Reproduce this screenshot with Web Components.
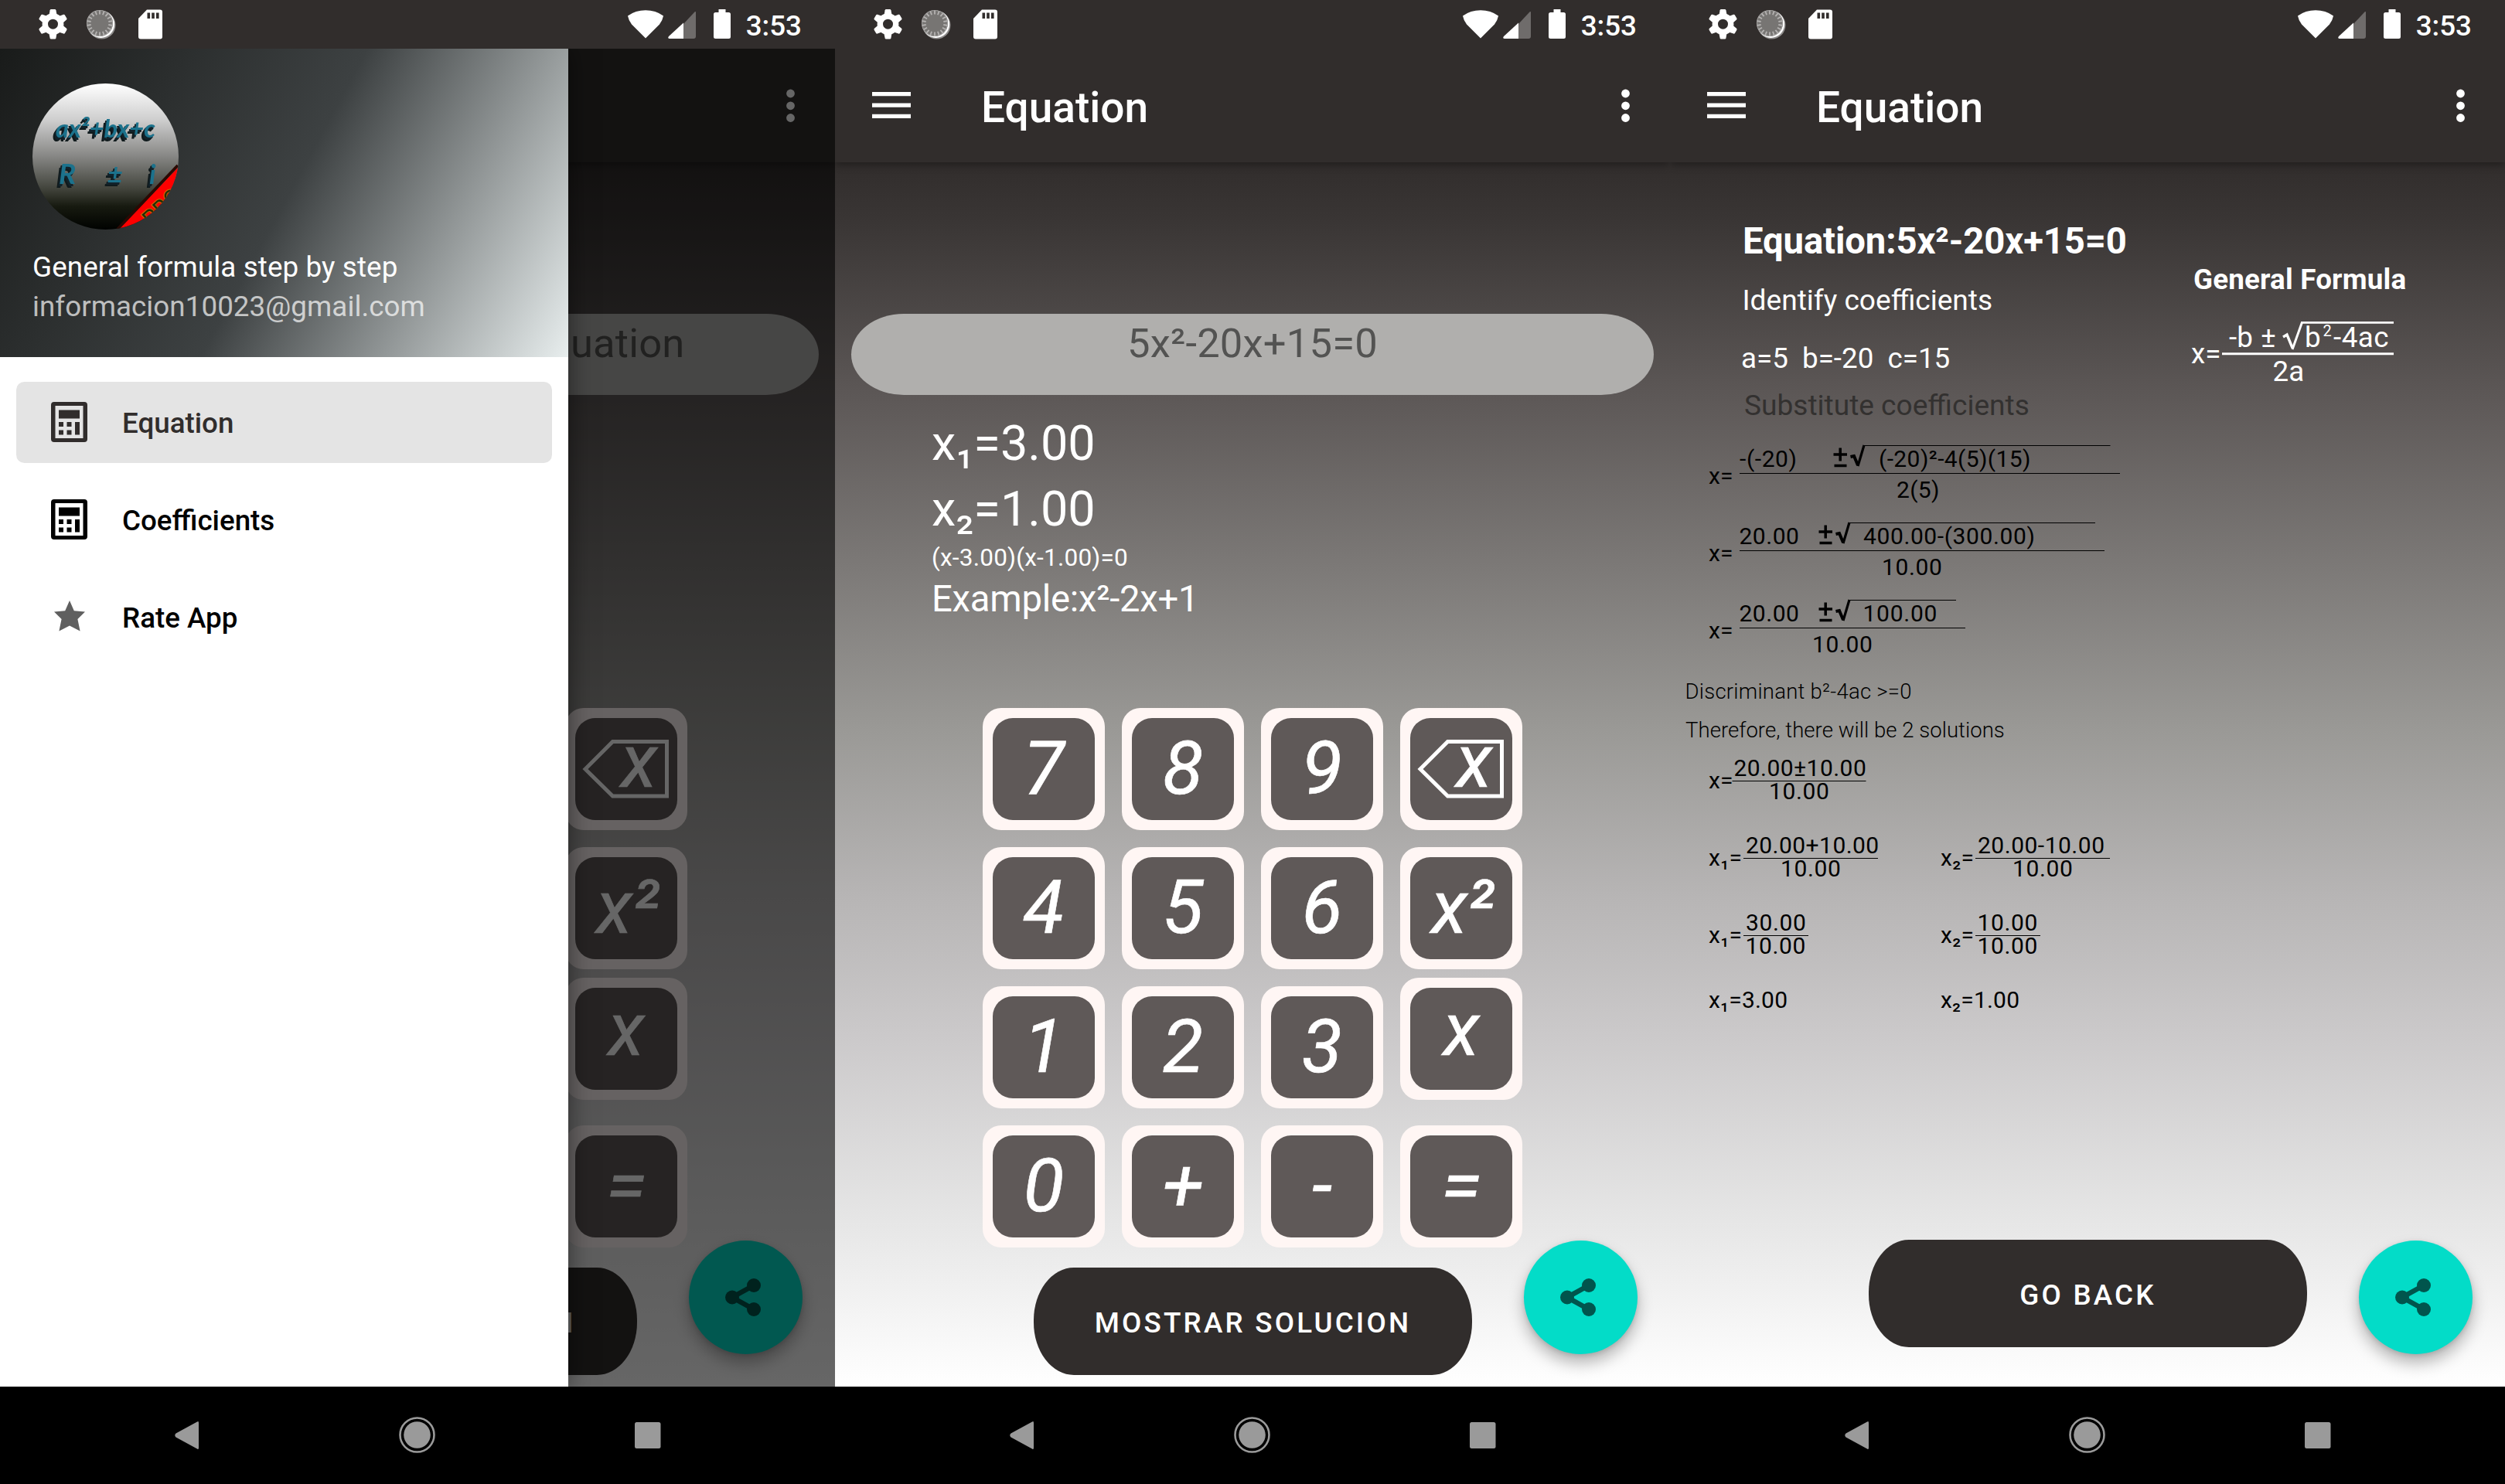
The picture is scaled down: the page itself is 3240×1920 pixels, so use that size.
<!DOCTYPE html>
<html lang="en">
<head>
<meta charset="utf-8">
<title>Equation</title>
<style>
html,body{margin:0;padding:0;background:#000}
body{width:3240px;height:1920px;overflow:hidden;display:flex;font-family:Roboto,"Noto Sans",sans-serif;color:#fff}
</style>
</head>
<body>
<phone-screen>
  <app-bar dim></app-bar>
  <app-page>
    <equation-field side="left">uation</equation-field>
    <key-pad columns="last"></key-pad>
    <wide-button short>N</wide-button>
  </app-page>
  <share-fab slot="over"></share-fab>
  <nav-drawer slot="drawer"></nav-drawer>
</phone-screen>
<phone-screen>
  <app-bar heading="Equation"></app-bar>
  <app-page>
    <equation-field>5x²-20x+15=0</equation-field>
    <result-list></result-list>
    <key-pad></key-pad>
    <wide-button>MOSTRAR SOLUCION</wide-button>
  </app-page>
  <share-fab slot="over"></share-fab>
</phone-screen>
<phone-screen>
  <app-bar heading="Equation"></app-bar>
  <app-page>
    <solution-steps></solution-steps>
    <wide-button>GO BACK</wide-button>
  </app-page>
  <share-fab slot="over"></share-fab>
</phone-screen>

<script>
const define = (name, render) => customElements.define(name, class extends HTMLElement {
  connectedCallback() {
    if (this.shadowRoot) return;
    this.attachShadow({mode: 'open'}).innerHTML = render(this);
  }
});

/* Text rows on a shared page: b is the baseline, x the left edge of each run. */
const stack = (top, rows) => {
  let bottom = top;
  return rows.map(r => {
    const f = Math.max(...r.items.map(i => i.f)), h = Math.round(f * 1.2);
    const y = r.b + 1 - h / 2 - 0.3418 * f;
    const margin = y - bottom;
    bottom = y + h;
    let end = 0;
    const runs = r.items.map(i => {
      const m = i.x - end;
      end = i.x;
      return `<span style="margin-left:${m.toFixed(1)}px;width:0;font-size:${i.f}px;line-height:${h}px;${i.s || ''}">${i.t}</span>`;
    }).join('');
    return `<div class="row" style="height:${h}px;margin-top:${margin.toFixed(2)}px">${runs}</div>`;
  }).join('');
};
const rowCss = '.row{display:flex;align-items:baseline;white-space:pre}.row span{display:block;flex:none}';

define('phone-screen', () => `
<style>
:host{display:flex;flex-direction:column;width:1080px;height:1920px;position:relative;overflow:hidden;flex:none}
</style>
<status-bar></status-bar><slot></slot><slot name="over"></slot><slot name="drawer"></slot><system-nav></system-nav>`);

define('status-bar', () => {
  let ticks = '';
  for (let a = 0; a < 360; a += 20) ticks += `<path d="M17 6.500v-5" transform="rotate(${a} 17 18)"/>`;
  let teeth = '';
  for (let a = 0; a < 360; a += 60) teeth += `<path d="M14.6 1.2Q15 0 16 0h5q1 0 1.4 1.2l1.7 8.8h-11z" transform="rotate(${a} 18.5 19.2)"/>`;
  return `
<style>
:host{display:flex;box-sizing:border-box;height:63px;padding:12px 43px 0 50px;background:#312d2c;flex:none;position:relative;z-index:5}
svg{display:block;flex:none;overflow:visible}
.time{margin-left:20px;font-size:36.75px;line-height:43px;font-weight:500;margin-top:-.5px}
</style>
<svg width="37" height="39" fill="#fff"><g>${teeth}</g><circle cx="18.5" cy="19.2" r="10.2" fill="none" stroke="#fff" stroke-width="7.4"/></svg>
<svg width="38" height="39" style="margin-left:25px"><circle cx="19.500" cy="20.500" r="18" fill="#8f8d8c"/><circle cx="18.500" cy="19.300" r="17.600" fill="#fff"/><circle cx="17" cy="18" r="17" fill="#777573"/><circle cx="17" cy="18" r="16.500" fill="none" stroke="#9b9998" stroke-width="1.200"/><g stroke="#b5b3b2" stroke-width="1.800" fill="none">${ticks}</g></svg>
<svg width="31" height="39" style="margin-left:29px"><path d="M11 .5H28q3 0 3 3v32q0 3-3 3H3q-3 0-3-3V12z" fill="#fff"/><path d="M11.5 4.500h3.600v7.500h-3.600zM17.200 4.500h3.600v7.500h-3.600zM23 4.500h3.600v7.500H23z" fill="#312d2c"/></svg>
<svg width="46" height="39" style="margin-left:auto"><path d="M0 8Q10 .8 23 .8T46 8Q45 14 41 19L23 37 5 19Q1 14 0 8z" transform="translate(0 .5)" fill="#fff"/></svg>
<svg width="36" height="39" style="margin-left:6px"><path d="M36 4v31q0 3-3 3H20V19L33.500 4.500Q36 2 36 4z" fill="#6f6c6b"/><path d="M20 17.500V38H2q-3-.5-1-3z" fill="#fff"/></svg>
<svg width="22" height="39" style="margin-left:23px"><path d="M6.500 0h9v4H19.500q2.500 0 2.500 2.500V35.500q0 2.500-2.500 2.500h-17Q0 38 0 35.500v-29Q0 4 2.500 4h4z" fill="#fff"/></svg>
<div class="time">3:53</div>`;
});

define('app-bar', el => `
<style>
:host{display:flex;align-items:center;box-sizing:border-box;height:147px;padding:0 52.500px 0 48px;background:#312d2c;flex:none;position:relative;z-index:1;box-shadow:0 3px 10px rgba(0,0,0,.35)}
svg{display:block;flex:none}
b{font-weight:500;font-size:55px;line-height:62px;margin-left:91px;margin-top:5px}
</style>
${el.hasAttribute('dim') ? '' : `<svg width="50" height="36" fill="#fff"><path d="M0 0h50v5.300H0zM0 14.400h50v5.300H0zM0 28.700h50v5.300H0z"/></svg><b>${el.getAttribute('heading')}</b>`}
<svg width="11" height="44" fill="#fff" style="margin-left:auto"><circle cx="5.500" cy="6" r="5.400"/><circle cx="5.500" cy="21.800" r="5.400"/><circle cx="5.500" cy="37.500" r="5.400"/></svg>`);

define('app-page', () => `
<style>
:host{display:flex;flex-direction:column;height:1584px;flex:none;overflow:hidden;
background:linear-gradient(#312d2c 0,#393534 4.500%,#5e5958 19.600%,#9a9996 46.400%,#b7b5b5 60%,#cbc9ca 71.300%,#e6e6e6 86.500%,#fff 100%)}
</style><slot></slot>`);

define('equation-field', el => `
<style>
:host{display:block;box-sizing:border-box;width:1038px;height:105px;margin:196px 21px 0;flex:none;border-radius:68px/52.500px;background:#b0afad;color:#535352;
font-size:52.500px;line-height:62px;letter-spacing:.2px;padding-top:7px;text-align:${el.getAttribute('side') === 'left' ? 'right' : 'center'};${el.getAttribute('side') === 'left' ? 'padding-right:173.500px' : ''}}
</style><slot></slot>`);

define('result-list', () => `
<style>:host{display:block;height:0;color:#fff}${rowCss}</style>
${stack(511, [
  {b: 595, items: [{x: 125, f: 63, t: 'x₁=3.00'}]},
  {b: 680, items: [{x: 125, f: 63, t: 'x₂=1.00'}]},
  {b: 731.5, items: [{x: 125, f: 31.5, t: '(x-3.00)(x-1.00)=0', s: 'letter-spacing:.22px'}]},
  {b: 791, items: [{x: 125, f: 47.25, t: 'Example:x²-2x+1', s: 'letter-spacing:-.25px'}]}
])}`);

define('key-pad', el => {
  const last = el.getAttribute('columns') === 'last';
  const keys = last ? ['del', 'x²', 'x', '='] : ['7','8','9','del','4','5','6','x²','1','2','3','x','0','+','-','='];
  return `
<style>
:host{display:grid;grid-template-columns:repeat(${last ? 1 : 4},158px);grid-auto-rows:158px;gap:22px;margin:405px 0 0 ${last ? 731 : 191}px;flex:none}
</style>${keys.map(k => `<calc-key face="${k}"></calc-key>`).join('')}`;
});

define('calc-key', el => {
  const k = el.getAttribute('face');
  return `
<style>
:host{display:grid;box-sizing:border-box;width:158px;height:158px;padding:13px;background:#fff6f4;border-radius:24px;${k === 'x' ? 'margin-top:-11px;' : ''}}
.face{grid-area:1/1;background:#5f5958;border-radius:26px;color:#fff;font:italic 400 97px/132px Roboto,sans-serif;-webkit-text-stroke:.6px #fff;text-align:center;white-space:pre}
.face span{display:block;margin-top:${k === 'x' ? -12 : k === 'del' ? -10 : -1}px;${k === 'del' ? 'margin-left:33px' : k === 'x²' ? 'margin-left:4px' : ''}}
svg{grid-area:1/1;overflow:visible;display:block}
</style>
<div class="face"><span>${k === 'del' ? 'x' : k}</span></div>
${k === 'del' ? '<svg width="132" height="132" fill="none" stroke="#fff" stroke-width="5"><path d="M13 66L48.500 30.500h70v70.500h-70z"/></svg>' : ''}`;
});

define('wide-button', () => `
<style>
:host{display:block;box-sizing:border-box;width:567px;height:139px;margin:26px 0 0 256.500px;flex:none;border-radius:52px/68px;background:#312d2c;color:#fff;
font-weight:500;font-size:36.750px;line-height:44px;letter-spacing:3.200px;padding:50px 0 0 1px;text-align:center}
:host([short]){text-align:right;padding-right:79px}
</style><slot></slot>`);

define('share-fab', () => `
<style>
:host{display:flex;align-items:center;justify-content:center;box-sizing:border-box;padding-right:7px;position:absolute;left:891px;top:1605px;width:147px;height:147px;border-radius:50%;background:#03dcc8;box-shadow:0 12px 20px rgba(0,0,0,.27),0 2px 6px rgba(0,0,0,.12)}
svg{display:block}
</style>
<svg width="46" height="49" fill="#01554d" stroke="#01554d"><path d="M37 9L9 24.500 37 40" fill="none" stroke-width="6.500"/><g stroke="none"><circle cx="37" cy="9" r="9"/><circle cx="9" cy="24.500" r="9"/><circle cx="37" cy="40" r="9"/></g></svg>`);

define('system-nav', () => `
<style>
:host{display:flex;align-items:center;box-sizing:border-box;height:126px;background:#000;flex:none;padding:0 225px 0 226px;justify-content:space-between;position:relative;z-index:6}
svg{display:block}
</style>
<svg width="31" height="38" fill="#9a9a9a"><path d="M29 1.500q2-1.500 2 1.500v32q0 3-2 1.500L1.500 21.500q-2.500-2.500 0-5z"/></svg>
<svg width="48" height="50"><circle cx="24.500" cy="24.500" r="22" fill="none" stroke="#9a9a9a" stroke-width="2.600"/><circle cx="24.500" cy="24.500" r="17.300" fill="#9a9a9a"/></svg>
<svg width="34" height="34" fill="#9a9a9a"><rect width="33.500" height="34" rx="2.500"/></svg>`);

define('nav-drawer', () => `
<style>
:host{display:flex;position:absolute;left:0;top:63px;width:1080px;height:1731px;background:rgba(0,0,0,.6);z-index:4}
.panel{display:flex;flex-direction:column;width:735px;background:#fff;box-shadow:0 0 30px rgba(0,0,0,.5)}
header{box-sizing:border-box;height:399px;padding:45px 42px 0;background:linear-gradient(118.500deg,#191b1a 0,#3d4142 50%,#e8eeee 100%)}
svg{display:block}
.name,.mail{font-size:36.750px;line-height:44px;white-space:pre;letter-spacing:.12px}
.name{margin-top:26.500px}
.mail{margin-top:7.500px;letter-spacing:.06px;color:rgba(255,255,255,.7)}
nav{display:flex;flex-direction:column;gap:21px;padding:32px 21px}
.ink text{font-family:Lato,sans-serif;font-style:italic;font-weight:700;fill:#1c728c;filter:drop-shadow(-1.500px 3px 0 #12222a) drop-shadow(-1.500px 2.500px 0 #101a1c)}
</style>
<div class="panel">
<header>
<svg width="189" height="189" viewBox="0 0 189 189">
<defs><linearGradient id="g" x2="0" y2="1"><stop offset="0" stop-color="#fff"/><stop offset=".25" stop-color="#cecece"/><stop offset=".5" stop-color="#868684"/><stop offset=".72" stop-color="#42443c"/><stop offset=".84" stop-color="#171a10"/><stop offset="1" stop-color="#000200"/></linearGradient><clipPath id="c"><circle cx="94.500" cy="94.500" r="94.500"/></clipPath></defs>
<g clip-path="url(#c)"><rect width="189" height="189" fill="url(#g)"/>
<g class="ink"><text x="30" y="70" font-size="33" textLength="129" lengthAdjust="spacingAndGlyphs">ax²+bx+c</text>
<text x="34" y="130" font-size="37">R</text><text x="97" y="129" font-size="34">±</text><text x="151" y="130" font-size="35">i</text></g>
<path d="M188 106L110 188.500" stroke="#2a0a04" stroke-width="4"/><path d="M190 107L111 190H190z" fill="#f00"/>
<text transform="translate(153 186) rotate(-43)" font-size="28" font-family="Roboto" fill="#24290a" stroke="#b87400" stroke-width="2" paint-order="stroke" textLength="56">PRO</text></g>
</svg>
<div class="name">General formula step by step</div>
<div class="mail">informacion10023@gmail.com</div>
</header>
<nav>
<drawer-item icon="calc" active>Equation</drawer-item>
<drawer-item icon="calc">Coefficients</drawer-item>
<drawer-item icon="star">Rate App</drawer-item>
</nav>
</div>`);

define('drawer-item', el => {
  const active = el.hasAttribute('active');
  return `
<style>
:host{display:flex;align-items:center;height:105px;border-radius:10.500px;color:${active ? '#312d2c' : '#000'};background:${active ? '#e4e4e4' : 'none'};
font-weight:500;font-size:36.750px;line-height:44px}
.icon{width:63px;margin:0 37px 0 37px;display:flex;justify-content:center;padding-bottom:1px}
svg{display:block}
.label{padding-top:2px}
</style>
<div class="icon">${el.getAttribute('icon') === 'calc'
  ? '<svg width="47" height="52" fill="currentColor"><path fill-rule="evenodd" d="M4 0H43q4 0 4 4v44q0 4-4 4H4q-4 0-4-4V4Q0 0 4 0zM5.500 5v42h36V5zM10 10.500H37v11H10zM10 26h6v6h-6zM20.500 26h6v6h-6zM31 26h6v16.500h-6zM10 36.500h6v6h-6zM20.500 36.500h6v6h-6z"/></svg>'
  : '<svg width="40" height="40" viewBox="0 0 40 40" fill="#5f5f5f" style="margin-top:-3px"><path d="M20 0l5.800 13.200L40 14.500 30.400 24l3.200 15.500L20 32.500 6.400 39.500 9.600 24 0 14.500l14.200-1.300z"/></svg>'}</div>
<div class="label"><slot></slot></div>`;
});

/* Worked solution: headings, the general formula and each substitution step. */
define('solution-steps', () => {
  const F = 36.75, S = 30;
  const run = (x, t, k = .6) => ({x, f: S, t, s: `letter-spacing:${k}px`});
  const wh = 'color:#fff;', wide = 'letter-spacing:.18px;';
  const rows = stack(210, [
    {b: 328, items: [{x: 94, f: 47.25, t: 'Equation:5x²-20x+15=0', s: wh + 'font-weight:700;letter-spacing:-.12px'}]},
    {b: 374, items: [{x: 677, f: F, t: 'General Formula', s: wh + wide + 'font-weight:700'}]},
    {b: 400, items: [{x: 93.5, f: 37.1, t: 'Identify coefficients', s: wh}]},
    {b: 448.5, items: [{x: 723, f: F, t: '-b', s: wh}, {x: 764, f: F, t: '±', s: wh}, {x: 821, f: F, t: 'b', s: wh}, {x: 858, f: F, t: '-4ac', s: wh + 'letter-spacing:.5px'}]},
    {b: 434, items: [{x: 844.5, f: 20, t: '2', s: wh}]},
    {b: 470, items: [{x: 674, f: F, t: 'x=', s: wh}]},
    {b: 476, items: [{x: 92, f: F, t: 'a=5  b=-20  c=15', s: wh}]},
    {b: 492.5, items: [{x: 779.5, f: F, t: '2a', s: wh + wide}]},
    {b: 536, items: [{x: 96, f: 37.1, t: 'Substitute coefficients', s: 'color:#333130'}]},
    {b: 603.5, items: [run(90, '-(-20)'), run(270, '(-20)²-4(5)(15)', .4)]},
    {b: 625.5, items: [run(50, 'x=', 0)]},
    {b: 643.5, items: [run(293, '2(5)', .3)]},
    {b: 703.5, items: [run(89.5, '20.00', .5), run(250, '400.00-(300.00)')]},
    {b: 725.5, items: [run(50, 'x=', 0)]},
    {b: 743.5, items: [run(274, '10.00')]},
    {b: 803.5, items: [run(89.5, '20.00', .5), run(249.5, '100.00', .75)]},
    {b: 825.5, items: [run(50, 'x=', 0)]},
    {b: 843.5, items: [run(184, '10.00')]},
    {b: 903, items: [{x: 19.5, f: 27.5, t: 'Discriminant b²-4ac &gt;=0', s: 'font-weight:300;letter-spacing:.25px'}]},
    {b: 953, items: [{x: 20, f: 27.5, t: 'Therefore, there will be 2 solutions', s: 'font-weight:300;letter-spacing:.05px'}]},
    {b: 1003.5, items: [run(82.5, '20.00±10.00', .45)]},
    {b: 1019.5, items: [run(50, 'x=', 0)]},
    {b: 1033.5, items: [run(128, '10.00')]},
    {b: 1103.5, items: [run(98, '20.00+10.00', .45), run(398, '20.00-10.00', .5)]},
    {b: 1119.5, items: [run(50, 'x₁=', .3), run(350, 'x₂=', .3)]},
    {b: 1133.5, items: [run(143, '10.00'), run(443, '10.00')]},
    {b: 1203.5, items: [run(98, '30.00'), run(397.5, '10.00')]},
    {b: 1219.5, items: [run(50, 'x₁=', .3), run(350, 'x₂=', .3)]},
    {b: 1233.5, items: [run(97.5, '10.00'), run(397.5, '10.00')]},
    {b: 1303.5, items: [run(50, 'x₁=3.00', .2), run(350, 'x₂=1.00', .2)]}
  ]);
  const root = (px, y, x2) => `<path d="M${px} ${y + 12}h17.500M${px + 8.700} ${y + 3.500}v17M${px + 1} ${y + 26.500}h16" stroke-width="3.500"/><path d="M${px + 22} ${y + 15}l4.500 -1 5 12" stroke-width="4"/><path d="M${px + 31.500} ${y + 27}L${px + 39.500} ${y}" stroke-width="3.200"/><path d="M${px + 38.500} ${y + .5}H${x2}" stroke-width="1.200"/>`;
  const line = (a, b, y) => `<path d="M${a} ${y}H${b}" stroke-width="1.200"/>`;
  return `
<style>
:host{display:grid;height:1368px;flex:none;color:#000}
:host>*{grid-area:1/1}
svg{display:block;width:1080px;height:1368px}
${rowCss}
</style>
<svg viewBox="0 210 1080 1368" fill="none" stroke="#000">
<g stroke="#fff"><path d="M714 457.700H936" stroke-width="3"/><path d="M816 417.300H936" stroke-width="2.800"/><path d="M793 436l5 -3 7 17" stroke-width="3.400"/><path d="M805 452L817.500 417" stroke-width="3"/></g>
${root(211.500, 576, 569.500)}${root(192.500, 676, 550)}${root(192.500, 776, 370)}
${line(90, 582, 612.5)}${line(90, 562, 712.5)}${line(90, 382, 812.5)}
${line(80.5, 253.5, 1010.5)}${line(95, 269, 1110.5)}${line(395, 569, 1110.5)}${line(95, 179, 1210.5)}${line(395, 479, 1210.5)}
</svg>
<div>${rows}</div>`;
});
</script>
</body>
</html>
